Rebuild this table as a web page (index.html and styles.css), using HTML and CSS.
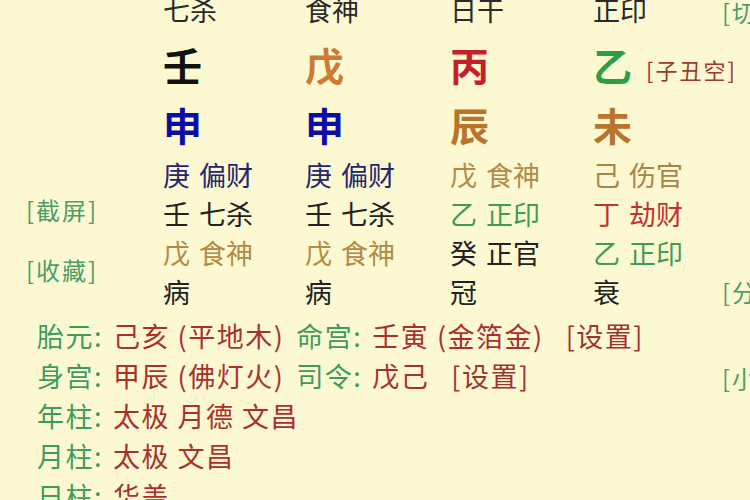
FILE: index.html
```html
<!DOCTYPE html>
<html lang="zh-CN">
<head>
<meta charset="utf-8">
<title>八字排盘</title>
<link rel="stylesheet" href="styles.css">
</head>
<body>
<div class="page">
  <div class="main">
    <div class="top">
      <div class="side">
        <div class="link">[截屏]</div>
        <div class="link">[收藏]</div>
      </div>
      <div class="chart">
        <div class="god">七杀</div>
        <div class="god">食神</div>
        <div class="god">日干</div>
        <div class="god">正印</div>

        <div class="stem c-black">壬</div>
        <div class="stem c-orange">戊</div>
        <div class="stem c-red">丙</div>
        <div class="stem c-green">乙<span class="kong">[子丑空]</span></div>

        <div class="branch c-blue">申</div>
        <div class="branch c-blue">申</div>
        <div class="branch c-brown">辰</div>
        <div class="branch c-brown">未</div>

        <div class="hid c-navy">庚 偏财</div>
        <div class="hid c-navy">庚 偏财</div>
        <div class="hid c-tan">戊 食神</div>
        <div class="hid c-tan2">己 伤官</div>

        <div class="hid c-ink">壬 七杀</div>
        <div class="hid c-ink">壬 七杀</div>
        <div class="hid c-lgreen">乙 正印</div>
        <div class="hid c-lred">丁 劫财</div>

        <div class="hid c-tan">戊 食神</div>
        <div class="hid c-tan">戊 食神</div>
        <div class="hid c-ink">癸 正官</div>
        <div class="hid c-lgreen">乙 正印</div>

        <div class="hid c-ink">病</div>
        <div class="hid c-ink">病</div>
        <div class="hid c-ink">冠</div>
        <div class="hid c-ink">衰</div>
      </div>
    </div>
    <div class="info">
      <div class="line"><span class="lbl">胎元:</span><span class="val">己亥 (平地木)</span><span class="lbl">命宫:</span><span class="val">壬寅 (金箔金)</span><span class="set">[设置]</span></div>
      <div class="line"><span class="lbl">身宫:</span><span class="val">甲辰 (佛灯火)</span><span class="lbl">司令:</span><span class="val">戊己</span><span class="set">[设置]</span></div>
      <div class="line"><span class="lbl">年柱:</span><span class="val">太极 月德 文昌</span></div>
      <div class="line"><span class="lbl">月柱:</span><span class="val">太极 文昌</span></div>
      <div class="line"><span class="lbl">日柱:</span><span class="val">华盖</span></div>
    </div>
  </div>
  <div class="rail">
    <div class="link r1">[切换]</div>
    <div class="link r2">[分享]</div>
    <div class="link r3">[小运]</div>
  </div>
</div>
</body>
</html>
```
FILE: styles.css
```css
html, body {
  margin: 0;
  padding: 0;
  width: 750px;
  height: 500px;
  overflow: hidden;
  background: #fcf9d2;
}

body {
  font-family: "Noto Sans CJK SC", "Noto Sans", sans-serif;
  color: #222;
}

.page {
  display: flex;
  margin-top: -8px;
}

.main {
  width: 722px;
  flex: none;
}

.top {
  display: flex;
}

.side {
  width: 163px;
  flex: none;
  box-sizing: border-box;
  padding: 203px 0 0 26px;
  display: flex;
  flex-direction: column;
  gap: 30px;
}

.link {
  font-size: 24px;
  line-height: 30px;
  color: #4e9d66;
  letter-spacing: 2px;
  white-space: nowrap;
}

.chart {
  flex: 1;
  display: grid;
  grid-template-columns: 142px 145px 143px 1fr;
  grid-template-rows: 36px 72px 55px 39px 39px 39px 39px;
}

.god {
  font-size: 27px;
  line-height: 36px;
  color: #2a2a2a;
}

.stem {
  font-size: 39px;
  line-height: 72px;
  font-weight: 700;
  white-space: nowrap;
}

.kong {
  font-size: 22px;
  font-weight: 400;
  color: #9a3b2e;
  margin-left: 14px;
  letter-spacing: 2px;
  vertical-align: 2px;
}

.branch {
  font-size: 39px;
  line-height: 48px;
  font-weight: 700;
}

.hid {
  font-size: 27px;
  line-height: 39px;
  word-spacing: 3px;
  white-space: nowrap;
}

.c-black { color: #111; }
.c-orange { color: #cd7a34; }
.c-red { color: #c4202c; }
.c-green { color: #2e9d46; }
.c-blue { color: #0c0ca6; }
.c-brown { color: #b9742c; }
.c-navy { color: #25266e; }
.c-ink { color: #222; }
.c-tan { color: #b38a45; }
.c-tan2 { color: #a8844a; }
.c-lgreen { color: #3f9c55; }
.c-lred { color: #c0342e; }

.info {
  padding: 5px 0 0 37px;
}

.line {
  font-size: 27px;
  line-height: 40px;
  letter-spacing: 1.5px;
  white-space: nowrap;
}

.lbl {
  color: #3e9b5e;
  margin-right: 10px;
}

.val {
  color: #a8302e;
  margin-right: 12px;
}

.set {
  color: #9c3430;
  margin-left: 10px;
}

.rail {
  flex: none;
}

.r1 {
  margin-top: 5px;
}

.r2 {
  margin-top: 250px;
}

.r3 {
  margin-top: 56px;
}
```
